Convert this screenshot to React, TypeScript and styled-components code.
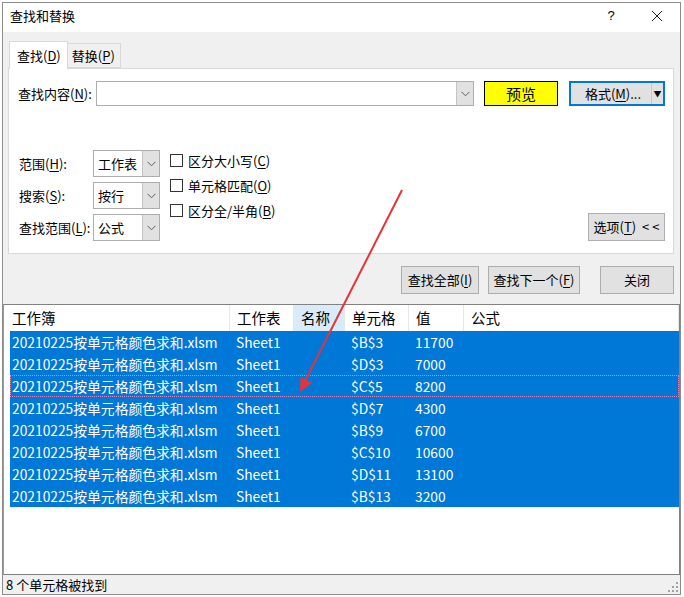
import styled, { createGlobalStyle } from "styled-components"

const GlobalStyle = createGlobalStyle`
  body {
    margin: 0;
    background: #fff;
    font-family: "Noto Sans CJK SC", "Noto Sans", sans-serif;
    color: #000;
  }
  * { box-sizing: border-box; }
  u { text-underline-offset: 2px; }
`

const results = [
  { cell: "$B$3", value: "11700" },
  { cell: "$D$3", value: "7000" },
  { cell: "$C$5", value: "8200", focused: true },
  { cell: "$D$7", value: "4300" },
  { cell: "$B$9", value: "6700" },
  { cell: "$C$10", value: "10600" },
  { cell: "$D$11", value: "13100" },
  { cell: "$B$13", value: "3200" },
]

const columns = ["工作簿", "工作表", "名称", "单元格", "值", "公式"]

const Page = styled.div`
  position: relative;
  width: 684px;
  height: 597px;
  padding: 2px 3px 2px 2px;
  overflow: hidden;
  background: #fff;
`

const Dialog = styled.div`
  width: 679px;
  height: 593px;
  border: 1px solid #8c8c8c;
  display: flex;
  flex-direction: column;
  font-size: 13px;
  line-height: 1.2;
`

const TitleBar = styled.div`
  height: 29px;
  flex: none;
  display: flex;
  align-items: center;
  padding: 0 0 3px 7px;
  background: #fff;
  font-size: 13px;
`

const TitleText = styled.span`
  flex: 1;
`

const TitleButton = styled.span`
  width: 46px;
  height: 26px;
  display: flex;
  align-items: center;
  justify-content: center;
  font-family: "Liberation Sans", sans-serif;
  font-size: 13px;
`

const Body = styled.div`
  flex: 1;
  display: flex;
  flex-direction: column;
  background: #f0f0f0;
  min-height: 0;
`

const TabArea = styled.div`
  padding: 9px 6px 0 5px;
`

const TabStrip = styled.div`
  display: flex;
  align-items: flex-end;
  padding-left: 1px;
`

const Tab = styled.div<{ $active?: boolean }>`
  position: relative;
  z-index: ${(p) => (p.$active ? 1 : 0)};
  height: ${(p) => (p.$active ? "28px" : "25px")};
  padding: ${(p) => (p.$active ? "0 6px 0 7px" : "0 5px 0 4px")};
  display: flex;
  align-items: center;
  background: ${(p) => (p.$active ? "#fff" : "#f0f0f0")};
  border: 1px solid #d9d9d9;
  border-bottom: ${(p) => (p.$active ? "none" : "1px solid #d9d9d9")};
  margin-bottom: ${(p) => (p.$active ? "-1px" : "0")};
  margin-left: ${(p) => (p.$active ? "0" : "-1px")};
  font-size: 13px;
`

const Panel = styled.div`
  height: 186px;
  background: #fff;
  border: 1px solid #d9d9d9;
  padding: 12px 8px 12px 9px;
  display: flex;
  flex-direction: column;
`

const FindRow = styled.div`
  display: flex;
  align-items: center;
  height: 25px;
`

const FieldLabel = styled.span<{ $width: number }>`
  width: ${(p) => p.$width}px;
  flex: none;
  font-size: 13px;
`

const Combo = styled.div<{ $width: number; $height: number }>`
  width: ${(p) => p.$width}px;
  height: ${(p) => p.$height}px;
  display: flex;
  border: 1px solid #adadad;
  background: #fff;
`

const ComboText = styled.span`
  flex: 1;
  display: flex;
  align-items: center;
  padding-left: 4px;
  font-size: 13px;
`

const ComboArrow = styled.span`
  width: 17px;
  display: flex;
  align-items: center;
  justify-content: center;
  background: #e1e1e1;
  border-left: 1px solid #c4c4c4;
`

const PreviewButton = styled.div`
  width: 74px;
  height: 25px;
  margin-left: 10px;
  display: flex;
  align-items: center;
  justify-content: center;
  background: #ffff00;
  border: 1px solid #000;
  font-size: 15px;
`

const SplitButton = styled.div`
  width: 96px;
  height: 25px;
  margin-left: 11px;
  display: flex;
  background: #e1e1e1;
  border: 2px solid #0078d7;
`

const SplitMain = styled.span`
  flex: 1;
  display: flex;
  align-items: center;
  justify-content: center;
  padding-left: 4px;
  font-size: 13px;
`

const SplitDrop = styled.span`
  width: 12px;
  display: flex;
  align-items: center;
  justify-content: center;
  border-left: 1px solid #c8c8c8;
  font-size: 8px;
`

const Options = styled.div`
  margin-top: auto;
  display: flex;
  align-items: flex-end;
`

const ScopeGrid = styled.div`
  display: grid;
  grid-template-columns: 74px 67px;
  row-gap: 5px;
  align-items: center;
  padding-left: 1px;
`

const CheckList = styled.div`
  align-self: flex-start;
  margin-top: -2px;
  margin-left: 10px;
  display: flex;
  flex-direction: column;
`

const CheckRow = styled.label`
  height: 25px;
  display: flex;
  align-items: center;
  gap: 5px;
  font-size: 13px;
`

const CheckBox = styled.span`
  width: 13px;
  height: 13px;
  border: 1px solid #333;
  background: #fff;
`

const Button = styled.div<{ $width: number }>`
  width: ${(p) => p.$width}px;
  height: 28px;
  flex: none;
  display: flex;
  align-items: center;
  justify-content: center;
  background: #e1e1e1;
  border: 1px solid #adadad;
  font-size: 13px;
`

const OptionsButton = styled(Button)`
  margin-left: auto;
`

const ActionRow = styled.div`
  display: flex;
  justify-content: flex-end;
  gap: 9px;
  padding: 12px 6px 0 0;
`

const CloseButton = styled(Button)`
  margin-left: 11px;
`

const ResultList = styled.div`
  flex: 1;
  margin-top: 10px;
  background: #fff;
  border: 1px solid #828282;
  border-left-color: #9a9a9a;
  padding-left: 6px;
  display: flex;
  flex-direction: column;
`

const gridCols = "220px 64px 51px 64px 55px 1fr"

const HeaderRow = styled.div`
  height: 26px;
  display: grid;
  grid-template-columns: ${gridCols};
  font-size: 14.5px;
`

const HeaderCell = styled.div<{ $first?: boolean; $hot?: boolean }>`
  display: flex;
  align-items: center;
  padding-left: ${(p) => (p.$first ? "2px" : "7px")};
  border-right: 1px solid #e8e8e8;
  background: ${(p) => (p.$hot ? "#d9ebf9" : "transparent")};
`

const ResultRow = styled.div<{ $focused?: boolean }>`
  height: 22px;
  display: grid;
  grid-template-columns: ${gridCols};
  background: #0078d7;
  color: #fff;
  font-size: 13.8px;
  outline: ${(p) => (p.$focused ? "1px dotted #e08ac0" : "none")};
  outline-offset: -1px;
`

const ResultCell = styled.div<{ $first?: boolean }>`
  display: flex;
  align-items: center;
  padding-left: ${(p) => (p.$first ? "2px" : "6px")};
  white-space: nowrap;
`

const StatusBar = styled.div`
  height: 19px;
  flex: none;
  display: flex;
  align-items: center;
  justify-content: space-between;
  padding: 0 2px 0 3px;
  font-size: 13px;
`

const Grip = styled.svg`
  align-self: flex-end;
  margin-bottom: 2px;
`

const Annotation = styled.svg`
  position: absolute;
  left: 0;
  top: 0;
  pointer-events: none;
`

const Chevron = () => (
  <svg width="9" height="6" viewBox="0 0 9 6">
    <path d="M0.5 0.8 L4.5 4.8 L8.5 0.8" fill="none" stroke="#606060" strokeWidth="1" />
  </svg>
)

const Select = ({ text }: { text: string }) => (
  <Combo $width={67} $height={27}>
    <ComboText>{text}</ComboText>
    <ComboArrow>
      <Chevron />
    </ComboArrow>
  </Combo>
)

const Check = ({ text, mnemonic }: { text: string; mnemonic: string }) => (
  <CheckRow>
    <CheckBox />
    <span>
      {text}(<u>{mnemonic}</u>)
    </span>
  </CheckRow>
)

export default function App() {
  return (
    <Page>
      <GlobalStyle />
      <Dialog>
        <TitleBar>
          <TitleText>查找和替换</TitleText>
          <TitleButton>?</TitleButton>
          <TitleButton>
            <svg width="12" height="12" viewBox="0 0 12 12">
              <path d="M1 1 L11 11 M11 1 L1 11" stroke="#222" strokeWidth="1" />
            </svg>
          </TitleButton>
        </TitleBar>
        <Body>
          <TabArea>
            <TabStrip>
              <Tab $active>
                查找(<u>D</u>)
              </Tab>
              <Tab>
                替换(<u>P</u>)
              </Tab>
            </TabStrip>
            <Panel>
              <FindRow>
                <FieldLabel $width={78}>
                  查找内容(<u>N</u>):
                </FieldLabel>
                <Combo $width={378} $height={25}>
                  <ComboText />
                  <ComboArrow>
                    <Chevron />
                  </ComboArrow>
                </Combo>
                <PreviewButton>预览</PreviewButton>
                <SplitButton>
                  <SplitMain>
                    格式(<u>M</u>)...
                  </SplitMain>
                  <SplitDrop>▼</SplitDrop>
                </SplitButton>
              </FindRow>
              <Options>
                <ScopeGrid>
                  <FieldLabel $width={74}>
                    范围(<u>H</u>):
                  </FieldLabel>
                  <Select text="工作表" />
                  <FieldLabel $width={74}>
                    搜索(<u>S</u>):
                  </FieldLabel>
                  <Select text="按行" />
                  <FieldLabel $width={74}>
                    查找范围(<u>L</u>):
                  </FieldLabel>
                  <Select text="公式" />
                </ScopeGrid>
                <CheckList>
                  <Check text="区分大小写" mnemonic="C" />
                  <Check text="单元格匹配" mnemonic="O" />
                  <Check text="区分全/半角" mnemonic="B" />
                </CheckList>
                <OptionsButton $width={77}>
                  选项(<u>T</u>)&nbsp;&nbsp;&lt; &lt;
                </OptionsButton>
              </Options>
            </Panel>
          </TabArea>
          <ActionRow>
            <Button $width={78}>
              查找全部(<u>I</u>)
            </Button>
            <Button $width={92}>
              查找下一个(<u>F</u>)
            </Button>
            <CloseButton $width={74}>关闭</CloseButton>
          </ActionRow>
          <ResultList>
            <HeaderRow>
              {columns.map((c, i) => (
                <HeaderCell key={c} $first={i === 0} $hot={c === "名称"}>
                  {c}
                </HeaderCell>
              ))}
            </HeaderRow>
            {results.map((r) => (
              <ResultRow key={r.cell} $focused={r.focused}>
                <ResultCell $first>20210225按单元格颜色求和.xlsm</ResultCell>
                <ResultCell>Sheet1</ResultCell>
                <ResultCell />
                <ResultCell>{r.cell}</ResultCell>
                <ResultCell>{r.value}</ResultCell>
                <ResultCell />
              </ResultRow>
            ))}
          </ResultList>
          <StatusBar>
            <span>8 个单元格被找到</span>
            <Grip width="10" height="10" viewBox="0 0 10 10">
              <g fill="#a0a0a0">
                <rect x="8" y="0" width="2" height="2" />
                <rect x="4" y="4" width="2" height="2" />
                <rect x="8" y="4" width="2" height="2" />
                <rect x="0" y="8" width="2" height="2" />
                <rect x="4" y="8" width="2" height="2" />
                <rect x="8" y="8" width="2" height="2" />
              </g>
            </Grip>
          </StatusBar>
        </Body>
      </Dialog>
      <Annotation width="684" height="597" viewBox="0 0 684 597">
        <line x1="402" y1="190" x2="305" y2="381" stroke="#e5333b" strokeWidth="2" />
        <polygon points="300,392 312,383 300.5,377" fill="#e5333b" />
      </Annotation>
    </Page>
  )
}
